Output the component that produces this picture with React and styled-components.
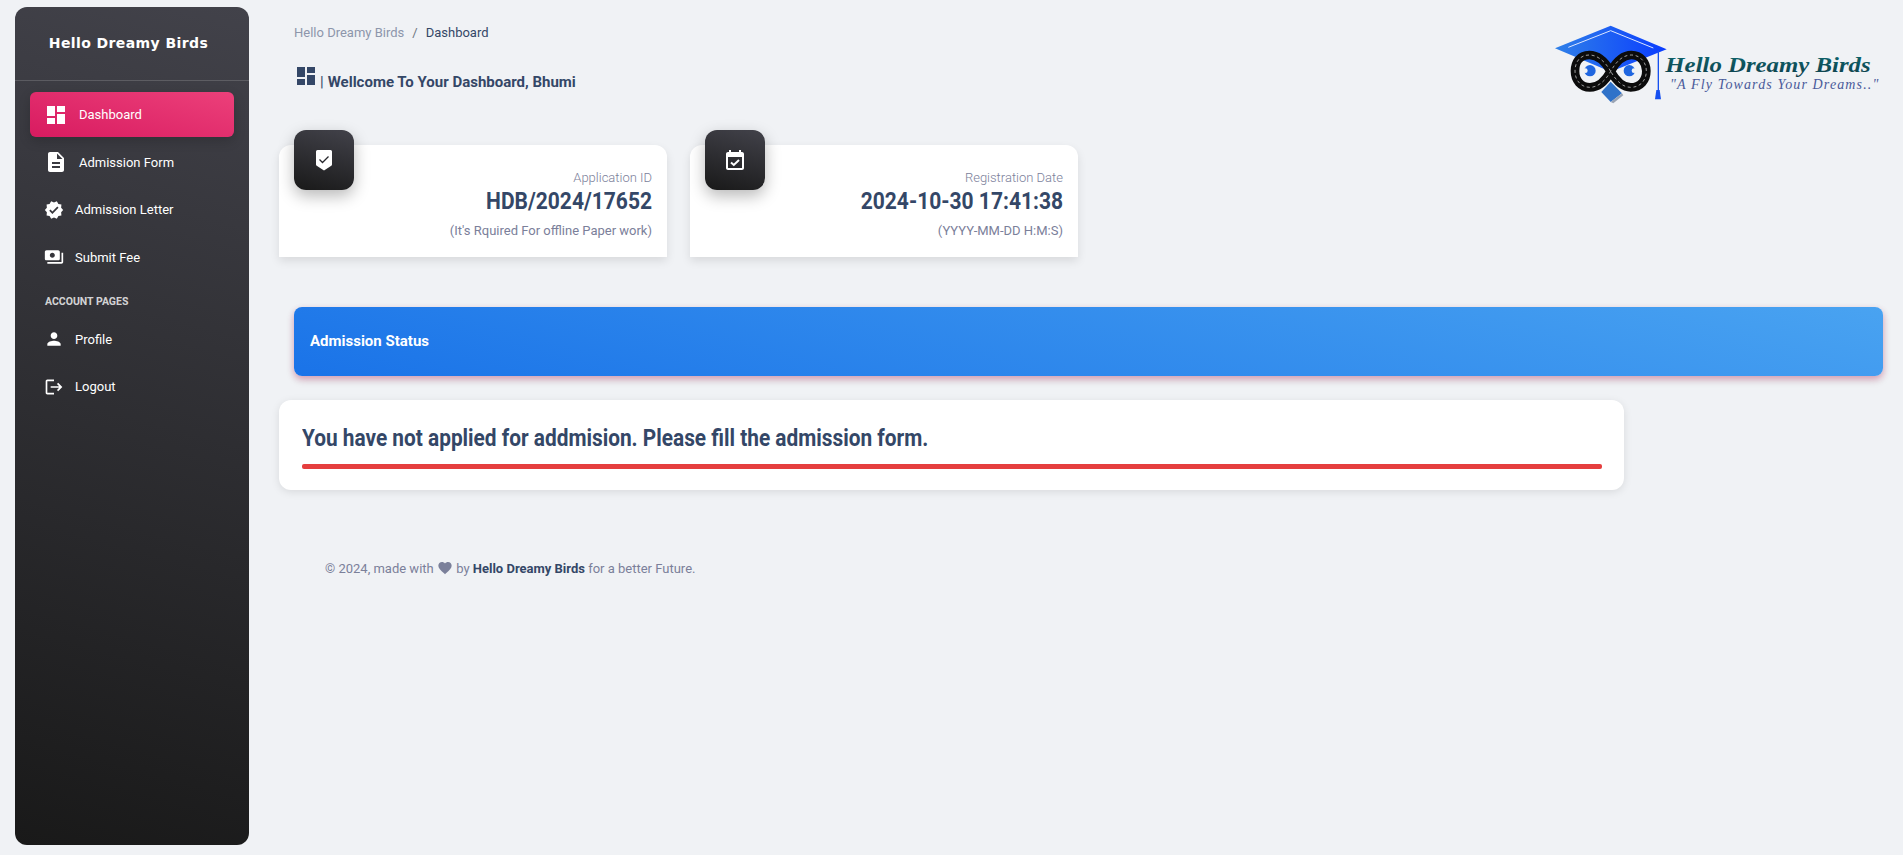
import React from 'react';
import styled, { createGlobalStyle } from 'styled-components';
import {
  MdDashboard,
  MdDescription,
  MdVerified,
  MdPayments,
  MdPerson,
  MdLogout,
  MdFavorite,
} from 'react-icons/md';

const GlobalStyle = createGlobalStyle`
  html, body {
    margin: 0;
    padding: 0;
    background: #f0f2f5;
    font-family: Roboto, "Liberation Sans", sans-serif;
    color: #344767;
  }
  * { box-sizing: border-box; }
`;

const Page = styled.div`
  display: flex;
  align-items: flex-start;
  height: 855px;
  overflow: hidden;
`;

const Sidebar = styled.aside`
  flex: 0 0 234px;
  height: 838px;
  margin: 7px 0 0 15px;
  border-radius: 12px;
  background: linear-gradient(195deg, #42424a, #191919);
  color: #fff;
`;

const Brand = styled.div`
  height: 74px;
  padding: 24px 7px 0 0;
  text-align: center;
  font-family: "DejaVu Sans", sans-serif;
  font-size: 14px;
  font-weight: 700;
  line-height: 24px;
  letter-spacing: 0.4px;
  border-bottom: 1px solid rgba(255, 255, 255, 0.16);
`;

const Nav = styled.nav`
  display: flex;
  flex-direction: column;
  gap: 2.5px;
  padding: 11px 15px 0;
`;

const NavItem = styled.a`
  display: flex;
  align-items: center;
  height: 45px;
  padding-left: 14px;
  gap: 11px;
  border-radius: 6px;
  font-size: 13px;
  color: #fff;
  background: ${(p) => (p.$active ? 'linear-gradient(195deg, #ec407a, #d81b60)' : 'transparent')};
  box-shadow: ${(p) => (p.$active ? '0 4px 12px rgba(0, 0, 0, 0.18)' : 'none')};

  svg {
    flex: 0 0 auto;
    font-size: ${(p) => (p.$large ? '24px' : '20px')};
    color: #fff;
  }
`;

const NavHeading = styled.div`
  margin: 12px 0 5px;
  padding-left: 15px;
  font-size: 10.5px;
  font-weight: 700;
  line-height: 15px;
  color: rgba(255, 255, 255, 0.8);
`;

const Main = styled.main`
  flex: 1;
  min-width: 0;
  margin-left: 30px;
  padding-right: 20px;
`;

const TopBar = styled.header`
  display: flex;
  justify-content: space-between;
  height: 110px;
  padding: 0 0 0 15px;
  margin-right: -20px;
`;

const Crumbs = styled.div`
  padding-top: 24px;
  font-size: 13px;
  line-height: 17px;
`;

const CrumbRoot = styled.span`
  color: #8d96ab;
`;

const CrumbSep = styled.span`
  margin: 0 8px;
  color: #6c757d;
`;

const Welcome = styled.h6`
  display: flex;
  align-items: flex-end;
  margin: 23px 0 0;
  font-size: 15px;
  font-weight: 700;
  line-height: 20px;

  svg {
    font-size: 24px;
    margin-bottom: 4px;
    margin-right: 2px;
  }
`;

const Pipe = styled.span`
  font-weight: 400;
  margin-right: 4px;
`;

const LogoWrap = styled.div`
  margin-top: 10px;
  width: 363px;
  height: 100px;
`;

const Stats = styled.section`
  display: flex;
  gap: 23px;
  margin-top: 35px;
`;

const StatCard = styled.div`
  position: relative;
  width: 388px;
  height: 112px;
  padding: 24px 15px 0;
  background: #fff;
  border-radius: 12px 12px 0 0;
  text-align: right;
  box-shadow: 0 4px 10px rgba(0, 0, 0, 0.1);
`;

const StatIcon = styled.div`
  position: absolute;
  top: -15px;
  left: 15px;
  display: flex;
  align-items: center;
  justify-content: center;
  width: 60px;
  height: 60px;
  border-radius: 12px;
  background: linear-gradient(195deg, #42424a, #191919);
  box-shadow: 0 6px 16px rgba(0, 0, 0, 0.28);
`;

const StatLabel = styled.div`
  font-size: 13px;
  font-weight: 300;
  line-height: 18px;
  color: #7b809a;
`;

const StatValue = styled.div`
  font-size: 24px;
  font-weight: 700;
  line-height: 29px;
  transform: scaleX(0.875);
  transform-origin: right center;
`;

const StatHint = styled.div`
  margin-top: 6px;
  font-size: 13px;
  line-height: 18px;
  color: #7b809a;
`;

const Banner = styled.div`
  display: flex;
  align-items: center;
  height: 69px;
  margin: 50px 0 24px 15px;
  padding: 0 16px 2px;
  border-radius: 8px;
  color: #fff;
  font-size: 15px;
  font-weight: 700;
  background: linear-gradient(195deg, #49a3f1, #1a73e8);
  box-shadow: 0 4px 10px rgba(0, 0, 0, 0.12), 0 3px 6px rgba(233, 30, 99, 0.3);
`;

const Notice = styled.div`
  width: 1345px;
  height: 90px;
  padding: 22px 22px 0 23px;
  background: #fff;
  border-radius: 12px;
  box-shadow: 0 2px 8px rgba(0, 0, 0, 0.1);
`;

const NoticeTitle = styled.h2`
  margin: 0;
  font-size: 24px;
  font-weight: 700;
  line-height: 32px;
  transform: scaleX(0.868);
  transform-origin: left center;
`;

const NoticeBar = styled.div`
  height: 5px;
  margin-top: 10px;
  border-radius: 2px;
  background: #e53e3e;
`;

const Footer = styled.footer`
  margin: 69px 0 0 46px;
  font-size: 13px;
  line-height: 20px;
  color: #7b809a;

  svg {
    font-size: 16px;
    vertical-align: -3px;
  }

  b {
    color: #344767;
    font-weight: 700;
  }
`;

const ShieldIcon = () => (
  <svg width="24" height="24" viewBox="0 0 24 24">
    <path
      d="M5.5 2h13a1.6 1.6 0 0 1 1.5 1.6V16.4c0 .5-.3 1-.7 1.3L12 22.4l-7.3-4.7c-.4-.3-.7-.8-.7-1.3V3.600A1.600 1.600 0 0 1 5.500 2z"
      fill="#fff"
    />
    <polyline points="7.500,11.500 10.500,14.500 16.500,8.500" fill="none" stroke="#26262b" strokeWidth="1.300" />
  </svg>
);

const CalendarIcon = () => (
  <svg width="24" height="24" viewBox="0 0 24 24">
    <path
      d="M19 4h-1V2h-2v2H8V2H6v2H5c-1.100 0-2 .9-2 2v14c0 1.100.9 2 2 2h14c1.100 0 2-.9 2-2V6c0-1.100-.9-2-2-2zm0 16H5V9h14v11z"
      fill="#fff"
    />
    <polyline points="8,14.500 10.800,17 16,12" fill="none" stroke="#fff" strokeWidth="2" />
  </svg>
);

const Logo = () => (
  <svg width="363" height="100" viewBox="0 0 1089 300">
    <defs>
      <linearGradient id="cap" x1="0" x2="1" y1="0" y2="0">
        <stop offset="0" stopColor="#2f80e8" />
        <stop offset="1" stopColor="#0a3cff" />
      </linearGradient>
      <linearGradient id="word" x1="0" x2="0" y1="0" y2="1">
        <stop offset="0" stopColor="#0d6a70" />
        <stop offset="1" stopColor="#0f3d4a" />
      </linearGradient>
    </defs>
    <polygon points="45,115 212,47 380,118 212,185" fill="url(#cap)" />
    <polyline points="85,112 212,62 340,114" fill="none" stroke="#dbe6ff" strokeWidth="3" />
    <line x1="355" y1="122" x2="355" y2="245" stroke="#1650f0" strokeWidth="4" />
    <path d="M345 268 L349 240 L359 240 L363 268 Z" fill="#1650f0" />
    <polygon points="212,215 246,250 212,276 184,246" fill="#2f72c9" />
    <polygon points="212,276 246,250 250,256 220,280" fill="#9aa4b4" />
    <path
      d="M212 184 C190 145 165 135 148 135 C118 135 105 158 105 183 C105 210 122 232 150 232 C172 232 195 215 212 184 C230 152 250 135 274 135 C302 135 319 158 319 183 C319 210 302 232 272 232 C250 232 230 215 212 184 Z"
      fill="none"
      stroke="#0c0c0c"
      strokeWidth="26"
    />
    <path
      d="M212 184 C190 145 165 135 148 135 C118 135 105 158 105 183 C105 210 122 232 150 232 C172 232 195 215 212 184 C230 152 250 135 274 135 C302 135 319 158 319 183 C319 210 302 232 272 232 C250 232 230 215 212 184 Z"
      fill="none"
      stroke="#e8e8e8"
      strokeWidth="2"
      strokeDasharray="9 8"
    />
    <circle cx="150" cy="182" r="17" fill="#1f66e0" />
    <circle cx="268" cy="182" r="17" fill="#1f66e0" />
    <circle cx="136" cy="182" r="7" fill="#f0f2f5" />
    <circle cx="282" cy="182" r="7" fill="#f0f2f5" />
    <text
      x="376"
      y="186"
      fontFamily="Liberation Serif, serif"
      fontStyle="italic"
      fontWeight="700"
      fontSize="66"
      textLength="616"
      lengthAdjust="spacingAndGlyphs"
      fill="url(#word)"
    >
      Hello Dreamy Birds
    </text>
    <text
      x="390"
      y="236"
      fontFamily="Liberation Serif, serif"
      fontStyle="italic"
      fontSize="42"
      textLength="625"
      lengthAdjust="spacing"
      fill="#4a5a9a"
    >
      "A Fly Towards Your Dreams.."
    </text>
  </svg>
);

const navMain = [
  { icon: <MdDashboard />, label: 'Dashboard', active: true, large: true },
  { icon: <MdDescription />, label: 'Admission Form', large: true },
  { icon: <MdVerified />, label: 'Admission Letter' },
  { icon: <MdPayments />, label: 'Submit Fee' },
];

const navAccount = [
  { icon: <MdPerson />, label: 'Profile' },
  { icon: <MdLogout />, label: 'Logout' },
];

const NavEntry = ({ item }) => (
  <NavItem $active={item.active} $large={item.large}>
    {item.icon}
    {item.label}
  </NavItem>
);

const App = () => (
  <Page>
    <GlobalStyle />
    <Sidebar>
      <Brand>Hello Dreamy Birds</Brand>
      <Nav>
        {navMain.map((n) => (
          <NavEntry key={n.label} item={n} />
        ))}
        <NavHeading>ACCOUNT PAGES</NavHeading>
        {navAccount.map((n) => (
          <NavEntry key={n.label} item={n} />
        ))}
      </Nav>
    </Sidebar>
    <Main>
      <TopBar>
        <div>
          <Crumbs>
            <CrumbRoot>Hello Dreamy Birds</CrumbRoot>
            <CrumbSep>/</CrumbSep>
            Dashboard
          </Crumbs>
          <Welcome>
            <MdDashboard />
            <Pipe>|</Pipe>
            Wellcome To Your Dashboard, Bhumi
          </Welcome>
        </div>
        <LogoWrap>
          <Logo />
        </LogoWrap>
      </TopBar>
      <Stats>
        <StatCard>
          <StatIcon>
            <ShieldIcon />
          </StatIcon>
          <StatLabel>Application ID</StatLabel>
          <StatValue>HDB/2024/17652</StatValue>
          <StatHint>(It's Rquired For offline Paper work)</StatHint>
        </StatCard>
        <StatCard>
          <StatIcon>
            <CalendarIcon />
          </StatIcon>
          <StatLabel>Registration Date</StatLabel>
          <StatValue>2024-10-30 17:41:38</StatValue>
          <StatHint>(YYYY-MM-DD H:M:S)</StatHint>
        </StatCard>
      </Stats>
      <Banner>Admission Status</Banner>
      <Notice>
        <NoticeTitle>You have not applied for addmision. Please fill the admission form.</NoticeTitle>
        <NoticeBar />
      </Notice>
      <Footer>
        © 2024, made with <MdFavorite /> by <b>Hello Dreamy Birds</b> for a better Future.
      </Footer>
    </Main>
  </Page>
);

export default App;
